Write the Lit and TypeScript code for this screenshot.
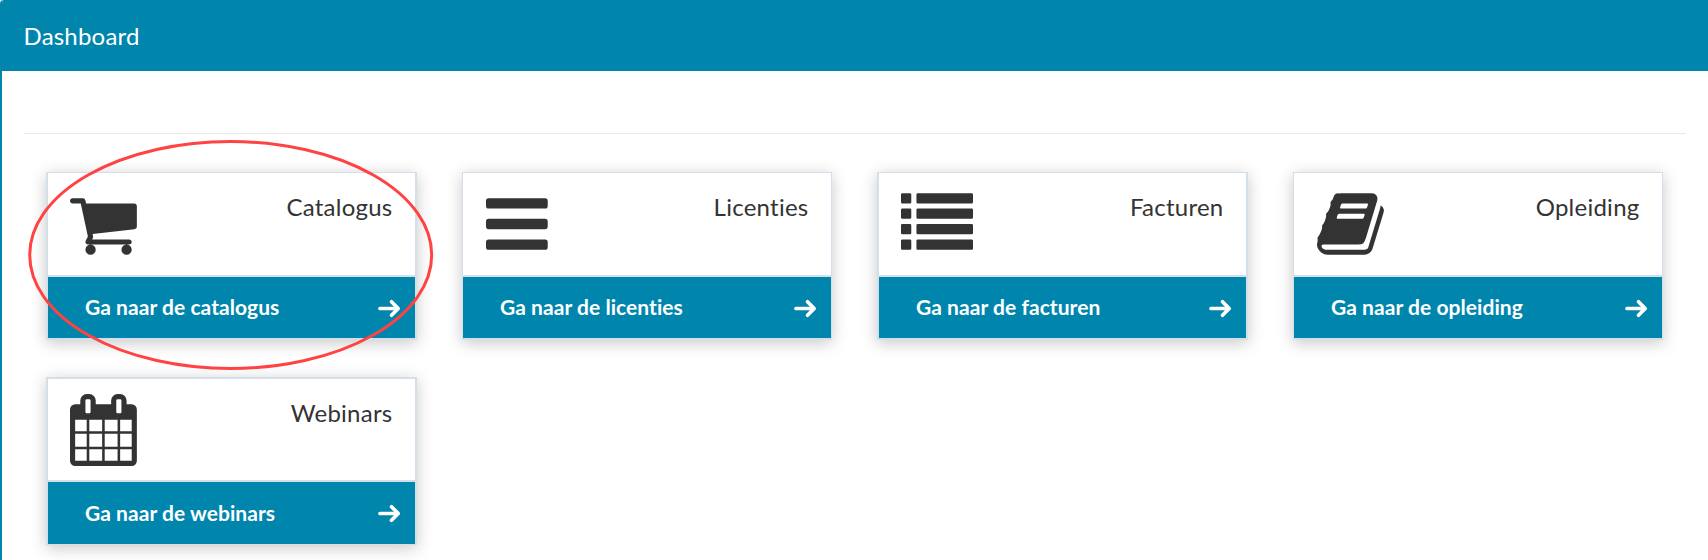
import { LitElement, html, css, svg } from "lit";
import { customElement, property } from "lit/decorators.js";
import { classMap } from "lit/directives/class-map.js";

interface Glyph { x: number; d: string }

const bar = (x: number, y: number, w: number, h: number, r: number) =>
  `M${x + r} ${y}h${w - 2 * r}a${r} ${r} 0 0 1 ${r} ${r}v${h - 2 * r}a${r} ${r} 0 0 1 ${-r} ${r}h${2 * r - w}a${r} ${r} 0 0 1 ${-r} ${-r}v${2 * r - h}a${r} ${r} 0 0 1 ${r} ${-r}z`;

const glyphs: Record<string, Glyph> = {
  cart: {
    x: 64,
    d: "M704 1536q0 52-38 90t-90 38-90-38-38-90 38-90 90-38 90 38 38 90zm896 0q0 52-38 90t-90 38-90-38-38-90 38-90 90-38 90 38 38 90zm128-1088v512q0 24-16.5 42.5t-40.5 21.5l-1044 122q13 60 13 70 0 16-24 64h920q26 0 45 19t19 45-19 45-45 19h-1024q-26 0-45-19t-19-45q0-11 8-31.5t16-36 21.5-40 15.5-29.5l-177-823h-204q-26 0-45-19t-19-45 19-45 45-19h256q16 0 28.5 6.5t19.5 15.5 13 24.5 8 26 5.5 29.5 4.5 26h1201q26 0 45 19t19 45z",
  },
  bars: { x: 128, d: [256, 768, 1280].map((y) => bar(128, y, 1536, 256, 64)).join("") },
  list: {
    x: 0,
    d: [128, 512, 896, 1280].map((y) => bar(0, y, 256, 256, 32) + bar(384, y, 1408, 256, 32)).join(""),
  },
  book: {
    x: 64,
    d: "M1703 478q40 57 18 129l-275 906q-19 64-76.5 107.5t-122.5 43.5h-923q-77 0-148.5-53.5t-99.5-131.5q-24-67-2-127 0-4 3-27t4-37q1-8-3-21.5t-3-19.5q2-11 8-21t16.5-23.5 16.5-23.5q23-38 45-91.5t30-91.5q3-10 .5-30t-.5-28q3-11 17-28t17-23q21-36 42-92t25-90q1-9-2.5-32t.5-28q4-13 22-30.5t22-22.5q19-26 42.5-84.5t27.5-96.5q1-8-3-25.5t-2-26.5q2-8 9-18t18-23 17-21q8-12 16.5-30.5t15-35 16-36 19.5-32 26.5-23.5 36-11.5 47.5 5.5l-1 3q38-9 51-9h761q74 0 114 56t18 130l-274 906q-36 119-71.5 153.5t-128.5 34.5h-869q-27 0-38 15-11 16-1 43 24 70 144 70h923q29 0 56-15.5t35-41.5l300-987q7-22 5-57 38 15 59 43zm-1064 2q-4 13 2 22.5t20 9.5h608q13 0 25.5-9.5t16.5-22.5l21-64q4-13-2-22.5t-20-9.5h-608q-13 0-25.5 9.5t-16.5 22.5zm-83 256q-4 13 2 22.5t20 9.5h608q13 0 25.5-9.5t16.5-22.5l21-64q4-13-2-22.5t-20-9.5h-608q-13 0-25.5 9.5t-16.5 22.5z",
  },
  calendar: {
    x: 64,
    d: "M192 1664h288v-288h-288v288zm352 0h320v-288h-320v288zm-352-352h288v-320h-288v320zm352 0h320v-320h-320v320zm-352-384h288v-288h-288v288zm736 736h320v-288h-320v288zm-384-736h320v-288h-320v288zm768 736h288v-288h-288v288zm-384-352h320v-320h-320v320zm-352-864v-288q0-13-9.5-22.5t-22.5-9.5h-64q-13 0-22.5 9.5t-9.5 22.5v288q0 13 9.5 22.5t22.5 9.5h64q13 0 22.5-9.5t9.5-22.5zm736 864h288v-320h-288v320zm-384-384h320v-288h-320v288zm384 0h288v-288h-288v288zm32-480v-288q0-13-9.5-22.5t-22.5-9.5h-64q-13 0-22.5 9.5t-9.5 22.5v288q0 13 9.5 22.5t22.5 9.5h64q13 0 22.5-9.5t9.5-22.5zm384-64v1280q0 52-38 90t-90 38h-1408q-52 0-90-38t-38-90v-1280q0-52 38-90t90-38h128v-96q0-66 47-113t113-47h64q66 0 113 47t47 113v96h384v-96q0-66 47-113t113-47h64q66 0 113 47t47 113v96h128q52 0 90 38t38 90z",
  },
};

@customElement("dash-card")
export class DashCard extends LitElement {
  @property() icon = "cart";
  @property() label = "";
  @property() action = "";

  static styles = css`
    :host { display: flex; flex-direction: column; box-sizing: border-box; }
    .body {
      height: var(--body-height, 104px); box-sizing: border-box; display: flex; justify-content: space-between;
      padding: 15px 22.5px 0 var(--icon-inset, 23px); border-bottom: 2px solid #d3e0ea; background: #fff;
    }
    .icon { width: 72px; height: 72px; fill: #333; overflow: visible; display: block; }
    .label { font-size: 24px; line-height: 33px; letter-spacing: 0.25px; padding-top: 2px; color: #333; }
    .footer {
      flex: 1; box-sizing: border-box; display: flex; align-items: center;
      justify-content: space-between; padding: 0 14px 0 37px;
      background: #0086ad; color: #fff; font-weight: 700; font-size: 21px;
      font-variant-ligatures: none; letter-spacing: 0.05px;
    }
    .action { padding-bottom: 2px; }
    .arrow { width: 24px; height: 20px; display: block; fill: none; stroke: #fff; stroke-width: 3.7; stroke-linecap: round; stroke-linejoin: round; }
  `;

  render() {
    const g = glyphs[this.icon];
    return html`
      <div class="body">
        <svg class="icon" viewBox="${g.x} 0 1792 1792">${svg`<path d=${g.d}></path>`}</svg>
        <span class="label">${this.label}</span>
      </div>
      <div class="footer">
        <span class="action">${this.action}</span>
        <svg class="arrow" viewBox="0 0 24 20"><path d="M3 10.5H20.5M14.5 3.8L21.2 10.5L14.5 17.2"></path></svg>
      </div>
    `;
  }
}

@customElement("app-root")
export class AppRoot extends LitElement {
  static styles = css`
    :host {
      display: block; box-sizing: border-box; height: 560px; overflow: hidden; position: relative;
      font-family: Lato, sans-serif; background: #fff; border-left: 2px solid #0086ad;
      border-top-left-radius: 4px;
    }
    .header {
      height: 71px; box-sizing: border-box; padding: 0 21.5px; display: flex; align-items: center;
      background: #0086ad; color: #fff; font-size: 24px; letter-spacing: 0.2px;
    }
    .content { padding: 62px 22px 0 22px; }
    .rule { border-top: 1px solid #eaeaea; }
    .cards {
      display: grid; grid-template-columns: 371px 370px 371px 370px;
      column-gap: 45px; padding: 38px 0 0 22px;
    }
    .card { height: 168px; margin-bottom: 37px; border: 1px solid #d3e0ea; border-bottom-width: 2px; box-shadow: 0 3px 15px rgba(0, 0, 0, 0.22); }
    .wide { border-left-width: 2px; border-right-width: 2px; --icon-inset: 22px; }
    .second { border-top-width: 2px; border-bottom-width: 1px; --body-height: 103px; }
    .marker { position: absolute; left: 26px; top: 139px; width: 406px; height: 232px; overflow: visible; fill: none; stroke: #ff4343; stroke-width: 3; }
  `;

  private items = [
    ["cart", "Catalogus", "Ga naar de catalogus"],
    ["bars", "Licenties", "Ga naar de licenties"],
    ["list", "Facturen", "Ga naar de facturen"],
    ["book", "Opleiding", "Ga naar de opleiding"],
    ["calendar", "Webinars", "Ga naar de webinars"],
  ];

  render() {
    return html`
      <div class="header">Dashboard</div>
      <div class="content">
        <div class="rule"></div>
        <div class="cards">
          ${this.items.map(([icon, label, action], i) => html`
            <dash-card
              class=${classMap({ card: true, wide: i % 2 === 0, second: i > 3 })}
              .icon=${icon} .label=${label} .action=${action}
            ></dash-card>`)}
        </div>
      </div>
      <svg class="marker" viewBox="0 0 406 232"><ellipse cx="202.7" cy="116" rx="201" ry="113.5"></ellipse></svg>
    `;
  }
}
